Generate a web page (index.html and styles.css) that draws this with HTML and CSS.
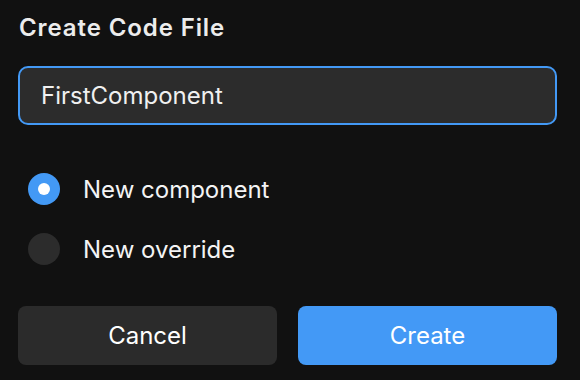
FILE: index.html
```html
<!DOCTYPE html>
<html lang="en">
<head>
  <meta charset="UTF-8">
  <meta name="viewport" content="width=device-width, initial-scale=1.0">
  <title>Create Code File</title>
  <link rel="stylesheet" href="styles.css">
</head>
<body>
  <div class="dialog">
    <h1>Create Code File</h1>

    <div class="field">
      <input type="text" value="FirstComponent">
    </div>

    <div class="options">
      <label class="option">
        <span class="radio radio-checked"></span>
        New component
      </label>
      <label class="option">
        <span class="radio"></span>
        New override
      </label>
    </div>

    <div class="actions">
      <button class="btn btn-secondary">Cancel</button>
      <button class="btn btn-primary">Create</button>
    </div>
  </div>
</body>
</html>
```

FILE: styles.css
```css
body {
  margin: 0;
  background-color: #111111;
  font-family: Inter, "Noto Sans", sans-serif;
  color: #f2f2f2;
}
.dialog {
  width: 539px;
  padding: 14px 0 0 18px;
}
h1 {
  margin: 0 0 24px 1px;
  font-size: 24px;
  line-height: 28px;
  font-weight: 600;
  letter-spacing: 0.9px;
  color: #ececec;
}
.field input {
  box-sizing: border-box;
  width: 100%;
  height: 59px;
  padding: 0 21px;
  border: 2px solid #4399f5;
  border-radius: 10px;
  background-color: #2c2c2c;
  color: #f0f0f0;
  font-family: inherit;
  font-size: 24px;
  outline: none;
}
.options {
  margin-top: 34px;
}
.option {
  display: flex;
  align-items: center;
  height: 60px;
  padding-left: 10px;
  gap: 23px;
  font-size: 24px;
  color: #f4f4f4;
}
.radio {
  width: 32px;
  height: 32px;
  border-radius: 50%;
  background-color: #2c2c2c;
  display: flex;
  align-items: center;
  justify-content: center;
}
.radio-checked {
  background-color: #4399f5;
}
.radio-checked::after {
  content: "";
  width: 12px;
  height: 12px;
  border-radius: 50%;
  background-color: #ffffff;
}
.actions {
  display: grid;
  grid-template-columns: 1fr 1fr;
  gap: 21px;
  margin-top: 27px;
}
.btn {
  height: 59px;
  border: none;
  border-radius: 8px;
  font-family: inherit;
  font-size: 24px;
  font-weight: 400;
  color: #ffffff;
}
.btn-secondary {
  background-color: #2b2b2b;
}
.btn-primary {
  background-color: #4399f6;
}
```
